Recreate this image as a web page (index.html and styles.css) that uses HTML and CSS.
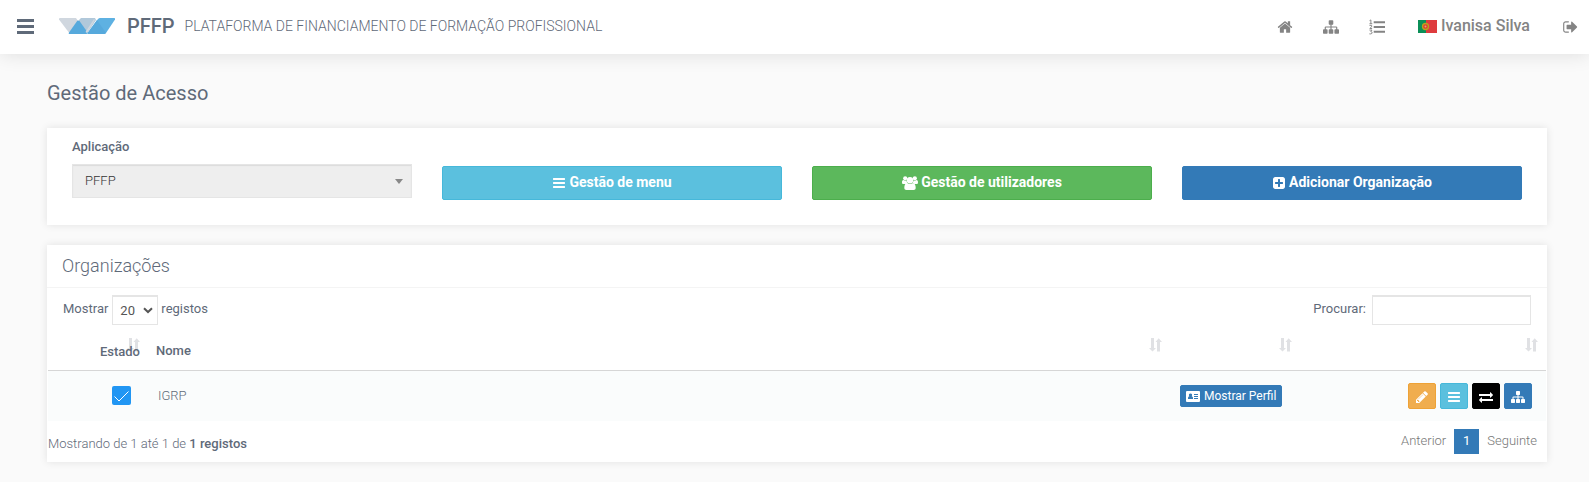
FILE: index.html
```html
<!DOCTYPE html>
<html lang="pt">
<head>
<meta charset="utf-8">
<meta name="viewport" content="width=device-width, initial-scale=1">
<title>Gestão de Acesso</title>
<link rel="stylesheet" href="styles.css">
</head>
<body>
<svg class="sprite" aria-hidden="true">
  <symbol id="bars" viewBox="0 0 1792 1792"><path d="M1664 1344v128q0 26-19 45t-45 19h-1408q-26 0-45-19t-19-45v-128q0-26 19-45t45-19h1408q26 0 45 19t19 45zm0-512v128q0 26-19 45t-45 19h-1408q-26 0-45-19t-19-45v-128q0-26 19-45t45-19h1408q26 0 45 19t19 45zm0-512v128q0 26-19 45t-45 19h-1408q-26 0-45-19t-19-45v-128q0-26 19-45t45-19h1408q26 0 45 19t19 45z"/></symbol>
  <symbol id="home" viewBox="0 0 1792 1792"><path d="M1472 992v480q0 26-19 45t-45 19h-384v-384h-256v384h-384q-26 0-45-19t-19-45v-480q0-1 .5-3t.5-3l575-474 575 474q1 2 1 6zm223-69l-62 74q-8 9-21 11h-3q-13 0-21-7l-692-577-692 577q-12 8-24 7-13-2-21-11l-62-74q-8-10-7-23.500t11-21.500l719-599q32-26 76-26t76 26l244 204v-195q0-14 9-23t23-9h192q14 0 23 9t9 23v408l219 182q10 8 11 21.500t-7 23.500z"/></symbol>
  <symbol id="sitemap" viewBox="0 0 1792 1792"><path d="M1792 1248v320q0 40-28 68t-68 28h-320q-40 0-68-28t-28-68v-320q0-40 28-68t68-28h96v-192h-512v192h96q40 0 68 28t28 68v320q0 40-28 68t-68 28h-320q-40 0-68-28t-28-68v-320q0-40 28-68t68-28h96v-192h-512v192h96q40 0 68 28t28 68v320q0 40-28 68t-68 28h-320q-40 0-68-28t-28-68v-320q0-40 28-68t68-28h96v-192q0-52 38-90t90-38h512v-192h-96q-40 0-68-28t-28-68v-320q0-40 28-68t68-28h320q40 0 68 28t28 68v320q0 40-28 68t-68 28h-96v192h512q52 0 90 38t38 90v192h96q40 0 68 28t28 68z"/></symbol>
  <symbol id="signout" viewBox="0 0 1664 1792"><path d="M704 1440q0 4 1 20t.5 26.500-3 23.500-10 19.500-20.500 6.500h-320q-119 0-203.500-84.500t-84.500-203.500v-704q0-119 84.500-203.500t203.500-84.500h320q13 0 22.500 9.500t9.500 22.500q0 4 1 20t.5 26.500-3 23.500-10 19.500-20.500 6.500h-320q-66 0-113 47t-47 113v704q0 66 47 113t113 47h312l11.500 1 11.500 3 8 5.500 7 9 2 13.500zm928-544q0 26-19 45l-544 544q-19 19-45 19t-45-19-19-45v-288h-448q-26 0-45-19t-19-45v-384q0-26 19-45t45-19h448v-288q0-26 19-45t45-19 45 19l544 544q19 19 19 45z"/></symbol>
  <symbol id="plus" viewBox="0 0 1792 1792"><path d="M1408 960v-128q0-26-19-45t-45-19h-320v-320q0-26-19-45t-45-19h-128q-26 0-45 19t-19 45v320h-320q-26 0-45 19t-19 45v128q0 26 19 45t45 19h320v320q0 26 19 45t45 19h128q26 0 45-19t19-45v-320h320q26 0 45-19t19-45zm256-544v960q0 119-84.500 203.500t-203.500 84.500h-960q-119 0-203.500-84.500t-84.500-203.500v-960q0-119 84.500-203.500t203.500-84.500h960q119 0 203.500 84.500t84.500 203.500z"/></symbol>
  <symbol id="pencil" viewBox="0 0 1792 1792"><path d="M491 1536l91-91-235-235-91 91v107h128v128h107zm523-928q0-22-22-22-10 0-17 7l-542 542q-7 7-7 17 0 22 22 22 10 0 17-7l542-542q7-7 7-17zm-54-192l416 416-832 832h-416v-416zm683 96q0 53-37 90l-166 166-416-416 166-165q36-38 90-38 53 0 91 38l235 234q37 39 37 91z"/></symbol>
  <symbol id="exchange" viewBox="0 0 1792 1792"><path d="M1792 1184v192q0 13-9.500 22.500t-22.500 9.500h-1376v192q0 13-9.500 22.500t-22.500 9.500q-12 0-24-10l-319-320q-9-9-9-22 0-14 9-23l320-320q9-9 23-9 13 0 22.500 9.500t9.500 22.500v192h1376q13 0 22.500 9.500t9.500 22.500zm0-544q0 14-9 23l-320 320q-9 9-23 9-13 0-22.500-9.500t-9.500-22.500v-192h-1376q-13 0-22.500-9.500t-9.500-22.500v-192q0-13 9.500-22.500t22.500-9.500h1376v-192q0-14 9-23t23-9q12 0 24 10l319 319q9 9 9 23z"/></symbol>
  <symbol id="users" viewBox="0 0 16 14"><circle cx="3.200" cy="2.300" r="2.100"/><circle cx="12.800" cy="2.300" r="2.100"/><circle cx="8" cy="4.200" r="3.200"/><path d="M1.600 4.100c1 .8 2 .8 3 .4 0 1.200.4 2 1 2.700C4.500 7.200 3.800 7.500 3.200 8.100H1.600C.5 8.100 0 7.600 0 6.700 0 5.300.3 4.100 1.600 4.100zM14.400 4.100c-1 .8-2 .8-3 .4 0 1.200-.4 2-1 2.700 1.100 0 1.800.3 2.400.9h1.600c1.100 0 1.600-.5 1.600-1.400 0-1.400-.3-2.600-1.600-2.600zM5.200 7c1.800 1.300 3.800 1.300 5.600 0 2 0 2.900 2.200 2.900 4.800 0 1.400-.8 2.200-2.100 2.200H4.400c-1.300 0-2.100-.8-2.100-2.200 0-2.600.9-4.800 2.900-4.800z"/></symbol>
  <symbol id="card" viewBox="0 0 14 11"><path fill-rule="evenodd" d="M1 0h12q1 0 1 1v9q0 1-1 1H1q-1 0-1-1V1q0-1 1-1zM2 8h5V7.300C7 6 6.500 5.400 5.700 5.200 6.600 3.700 6 2.500 4.500 2.500S2.400 3.700 3.300 5.200C2.500 5.400 2 6 2 7.300zM8 3v1h4V3zm0 2v1h4V5zm0 2v1h4V7z"/></symbol>
  <symbol id="list" viewBox="0 0 17 16"><path d="M5 2h12v2H5zM5 7h12v2H5zM5 12h12v2H5z"/><path class="digits" d="M.6 1.200 2 .5V4.500M.5 4.500h3M.5 6.300h2.300v1.500L.8 9.600h2.500M.5 11.300h2.700L1.900 12.900c2 0 1.800 2.400 0 2.400H.4"/></symbol>
  <symbol id="sort" viewBox="0 0 13 14"><path d="M2 0h3v10h2L3.500 13.500 0 10h2zM8 13.500V4H6.500L9.700.3 13 4h-2v9.500z"/></symbol>
  <symbol id="chevron" viewBox="0 0 10 7"><path class="line" d="M1 1.200 5 5l4-3.800"/></symbol>
  <symbol id="caret" viewBox="0 0 8 5"><path d="M0 0h8L4 5z"/></symbol>
</svg>

<header class="topbar">
  <button class="menu-button" type="button" aria-label="Menu"><svg viewBox="0 0 17 15"><path d="M0 0h17v3H0zM0 6h17v3H0zM0 12h17v3H0z"/></svg></button>
  <svg class="logo" viewBox="0 0 56 16" aria-hidden="true"><path d="M1 0h16l10 15q0 1-1 1H11L0 1.500Q-.5 0 1 0z" fill="#d0d7df"/><path d="M22 0h14l1 2-8 12-3 2-7-13z" fill="#b1c8da"/><path d="M20.500 3 29 15q-.5 1-2 1H11q-2 0-1-1.500l8.500-12z" fill="#56a9dc"/><path d="m36 2-8 13-1.500-1L35 1z" fill="#d0d7df"/><path d="M41 0h14q2 0 1 1.500L47 15q-1 1-2 1H30q-2 0-1-1.500L39 1q1-1 2-1z" fill="#5eb1e2"/><path d="m38 2 9 13q-1 1-2 1H30q-2 0-1-1.500z" fill="#56a9dc"/></svg>
  <span class="brand">PFFP</span>
  <span class="tagline">PLATAFORMA DE FINANCIAMENTO DE FORMAÇÃO PROFISSIONAL</span>
  <nav class="top-nav">
    <a href="#" aria-label="Início"><svg class="icon-16"><use href="#home"/></svg></a>
    <a href="#" aria-label="Organizações"><svg class="icon-16"><use href="#sitemap"/></svg></a>
    <a href="#" aria-label="Lista"><svg class="icon-16"><use href="#list"/></svg></a>
  </nav>
  <a class="user" href="#"><svg class="flag" viewBox="0 0 19 13" aria-hidden="true"><path d="M0 0h8v13H0z" fill="#0b8f58"/><path d="M8 0h11v13H8z" fill="#de3b3e"/><circle cx="7.500" cy="6.500" r="3" fill="#e23b2e" stroke="#b5a51f" stroke-width="1.300"/><circle cx="7.500" cy="6.500" r="1" fill="#d9a67a"/></svg>Ivanisa Silva</a>
  <a class="sign-out" href="#" aria-label="Sair"><svg class="icon-16"><use href="#signout"/></svg></a>
</header>

<main class="content">
  <h1 class="page-title">Gestão de Acesso</h1>

  <section class="panel actions">
    <div class="field">
      <label class="field-label" for="app">Aplicação</label>
      <div class="select-box">
        <select id="app" class="app-select"><option>PFFP</option></select>
        <svg class="caret" aria-hidden="true"><use href="#caret"/></svg>
      </div>
    </div>
    <button class="button info" type="button"><svg class="icon-14"><use href="#bars"/></svg>Gestão de menu</button>
    <button class="button success" type="button"><svg class="icon-16"><use href="#users"/></svg>Gestão de utilizadores</button>
    <button class="button primary" type="button"><svg class="icon-14"><use href="#plus"/></svg>Adicionar Organização</button>
  </section>

  <section class="panel">
    <h2 class="panel-title">Organizações</h2>
    <div class="toolbar">
      <label class="length" for="length"><span>Mostrar</span>
        <span class="select-box">
          <select id="length" class="length-select"><option>20</option></select>
          <svg class="chevron" aria-hidden="true"><use href="#chevron"/></svg>
        </span>
        <span>registos</span></label>
      <label class="search" for="search"><span>Procurar:</span> <input id="search" class="search-input" type="search"></label>
    </div>
    <div class="table-wrap">
      <table class="table">
        <thead>
          <tr>
            <th class="col-state"><svg class="sort"><use href="#sort"/></svg><span class="over">Estado</span></th>
            <th class="col-name">Nome<svg class="sort"><use href="#sort"/></svg></th>
            <th class="col-profile"><svg class="sort"><use href="#sort"/></svg></th>
            <th class="col-tools"><svg class="sort"><use href="#sort"/></svg></th>
          </tr>
        </thead>
        <tbody>
          <tr>
            <td class="col-state"><label class="check"><input type="checkbox" checked aria-label="Estado de IGRP"><svg class="tick" viewBox="0 0 15 11" aria-hidden="true"><path class="line" d="M.5 5.500 5 10 14.500.5"/></svg></label></td>
            <td class="name-cell">IGRP</td>
            <td class="profile-cell"><button class="profile-button primary" type="button"><svg class="card-icon"><use href="#card"/></svg>Mostrar Perfil</button></td>
            <td class="tools-cell">
              <div class="tools">
                <button class="tool warning" type="button" aria-label="Editar"><svg class="icon-14"><use href="#pencil"/></svg></button>
                <button class="tool info" type="button" aria-label="Menu"><svg class="icon-14"><use href="#bars"/></svg></button>
                <button class="tool dark" type="button" aria-label="Trocar"><svg class="icon-14"><use href="#exchange"/></svg></button>
                <button class="tool primary" type="button" aria-label="Estrutura"><svg class="icon-14"><use href="#sitemap"/></svg></button>
              </div>
            </td>
          </tr>
        </tbody>
      </table>
      <div class="table-footer">
        <p class="summary">Mostrando de 1 até 1 de <b>1 registos</b></p>
        <nav class="pages" aria-label="Páginas">
          <a href="#">Anterior</a>
          <a class="current" href="#" aria-current="page">1</a>
          <a href="#">Seguinte</a>
        </nav>
      </div>
    </div>
  </section>
</main>
</body>
</html>
```
FILE: styles.css
```css
* { box-sizing: border-box; }

body {
  margin: 0;
  background: #fafafa;
  color: #5f6a79;
  font: 300 13px/20px Roboto, "Liberation Sans", sans-serif;
}

.sprite { position: absolute; width: 0; height: 0; }
svg { display: block; flex: none; fill: currentColor; }
button, input, select { font: inherit; color: inherit; margin: 0; }
button { cursor: pointer; }
a { color: inherit; text-decoration: none; }
.line { fill: none; stroke: currentColor; }
.digits { fill: none; stroke: currentColor; stroke-width: 1; }
.icon-14 { width: 14px; height: 14px; }
.icon-16 { width: 16px; height: 16px; }

.topbar {
  display: flex;
  align-items: center;
  height: 54px;
  padding: 0 11px 2px 17px;
  background: #fff;
  box-shadow: 0 0 20px rgba(0, 0, 0, 0.12);
}
.menu-button { padding: 1px 0 0; border: 0; background: none; }
.menu-button svg { width: 17px; height: 15px; }
.logo { width: 56px; height: 16px; margin: 0 12px 0 25px; }
.brand { font-size: 20px; font-weight: 500; }
.tagline { margin-left: 10px; padding-bottom: 1px; font-size: 14px; white-space: nowrap; }
.top-nav { display: flex; gap: 30px; margin: 2px 33px 0 auto; color: #848484; }
.user {
  display: flex;
  align-items: center;
  gap: 4px;
  margin-right: 32px;
  color: #848484;
  font-size: 16px;
  font-weight: 500;
  white-space: nowrap;
}
.flag { width: 19px; height: 13px; }
.sign-out { margin-top: 2px; color: #848484; }

.content { padding: 26px 42px 20px 47px; }
.page-title { margin: 0 0 22px; font-size: 20px; line-height: 26px; font-weight: 400; }

.panel { margin-bottom: 20px; background: #fff; box-shadow: 0 0 8px rgba(0, 0, 0, 0.1); }
.actions {
  display: grid;
  grid-template-columns: repeat(4, 1fr);
  align-items: end;
  gap: 30px;
  padding: 9px 25px 25px;
}
.field { display: grid; gap: 7px; padding-bottom: 2px; }
.field-label { font-weight: 500; }
.select-box { position: relative; display: inline-block; }
.app-select {
  display: block;
  appearance: none;
  width: 100%;
  height: 34px;
  padding: 0 12px;
  border: 1px solid #e5e5e5;
  border-radius: 0;
  background: #eee;
  box-shadow: inset 0 1px 1px rgba(0, 0, 0, 0.08);
  color: #333;
}
.caret { position: absolute; right: 9px; top: 15px; width: 8px; height: 5px; color: #888; }

.button {
  display: flex;
  align-items: center;
  justify-content: center;
  gap: 3px;
  height: 34px;
  padding: 0 12px 2px;
  border: 1px solid;
  border-radius: 2px;
  font-size: 14px;
  font-weight: 700;
}
.button svg { margin-top: 1px; }
.info { background: #5bc0de; border-color: #46b8da; color: #fff; }
.success { background: #5cb85c; border-color: #4cae4c; color: #fff; }
.primary { background: #337ab7; border-color: #337ab7; color: #fff; }
.warning { background: #f0ad4e; border-color: #eea236; color: #fff; }
.dark { background: #000; border-color: #000; color: #fff; }

.panel-title {
  margin: 0;
  padding: 9px 15px;
  border-bottom: 1px solid #f4f4f4;
  font-size: 18px;
  line-height: 24px;
  font-weight: 300;
}
.toolbar {
  display: flex;
  justify-content: space-between;
  padding: 7px 16px 0;
  font-weight: 400;
}
.length, .search { display: flex; gap: 3px; height: 30px; line-height: 27px; }
.length .select-box { margin-left: 1px; }
.search { gap: 6px; }
.length-select {
  display: block;
  appearance: none;
  width: 46px;
  height: 30px;
  padding: 0 7px 1px;
  border: 1px solid #e5e5e5;
  border-top-width: 2px;
  border-radius: 0;
  background: #fff;
  color: #555;
}
.chevron { position: absolute; right: 5px; top: 12px; width: 10px; height: 7px; color: #555; stroke-width: 2; }
.search-input {
  width: 159px;
  height: 30px;
  padding: 4px 10px;
  border: 1px solid #e5e5e5;
  border-top-width: 2px;
  background: #fff;
}

.table-wrap { padding: 0 1px 8px; }
.table { width: 100%; table-layout: fixed; border-collapse: separate; border-spacing: 0; }
.table th {
  position: relative;
  height: 46px;
  padding: 7px 8px 0;
  border-bottom: 1px solid #d6d6d6;
  font-weight: 500;
  text-align: left;
}
.table th.col-state { padding-top: 9px; text-align: right; }
.table td { height: 50px; padding: 0 8px; background: #fafcfc; }
.col-state { width: 100px; }
.col-profile { width: 130px; }
.col-tools { width: 246px; }
.over { position: relative; }
.sort { position: absolute; right: 8px; top: 13px; width: 13px; height: 14px; color: #e0e1e4; }
td.col-state { text-align: right; }
.check { position: relative; display: block; width: 19px; height: 19px; margin: 0 9px 2px auto; }
.check input { display: block; appearance: none; width: 19px; height: 19px; margin: 0; border-radius: 2px; background: #2196f3; }
.tick { position: absolute; left: 2px; top: 5px; width: 15px; height: 11px; color: #fff; pointer-events: none; }
.table .name-cell { padding-left: 10px; }
.profile-button {
  display: flex;
  align-items: center;
  gap: 4px;
  height: 22px;
  padding: 0 5px;
  border: 1px solid #337ab7;
  border-radius: 2px;
  font-size: 12px;
  font-weight: 400;
  white-space: nowrap;
}
.card-icon { width: 14px; height: 11px; }
.table .profile-cell { padding-left: 10px; }
.table .tools-cell { padding-right: 14px; }
.tools { display: flex; justify-content: flex-end; gap: 4px; }
.tool { display: grid; place-items: center; width: 28px; height: 26px; padding: 2px 0 0; border: 1px solid; border-radius: 2px; }
.warning { border-color: #eea236; }
.tool.info { border-color: #46b8da; }
.tool.dark { border-color: #000; }
.tool.primary { border-color: #337ab7; }

.table-footer { display: flex; justify-content: space-between; padding-top: 8px; }
.summary { margin: 5px 0 0; }
.summary b { font-weight: 500; }
.pages { display: flex; padding-right: 9px; gap: 8px; line-height: 24px; color: #777; }
.pages .current { width: 25px; height: 25px; background: #337ab7; color: #fff; text-align: center; font-weight: 400; }
```
